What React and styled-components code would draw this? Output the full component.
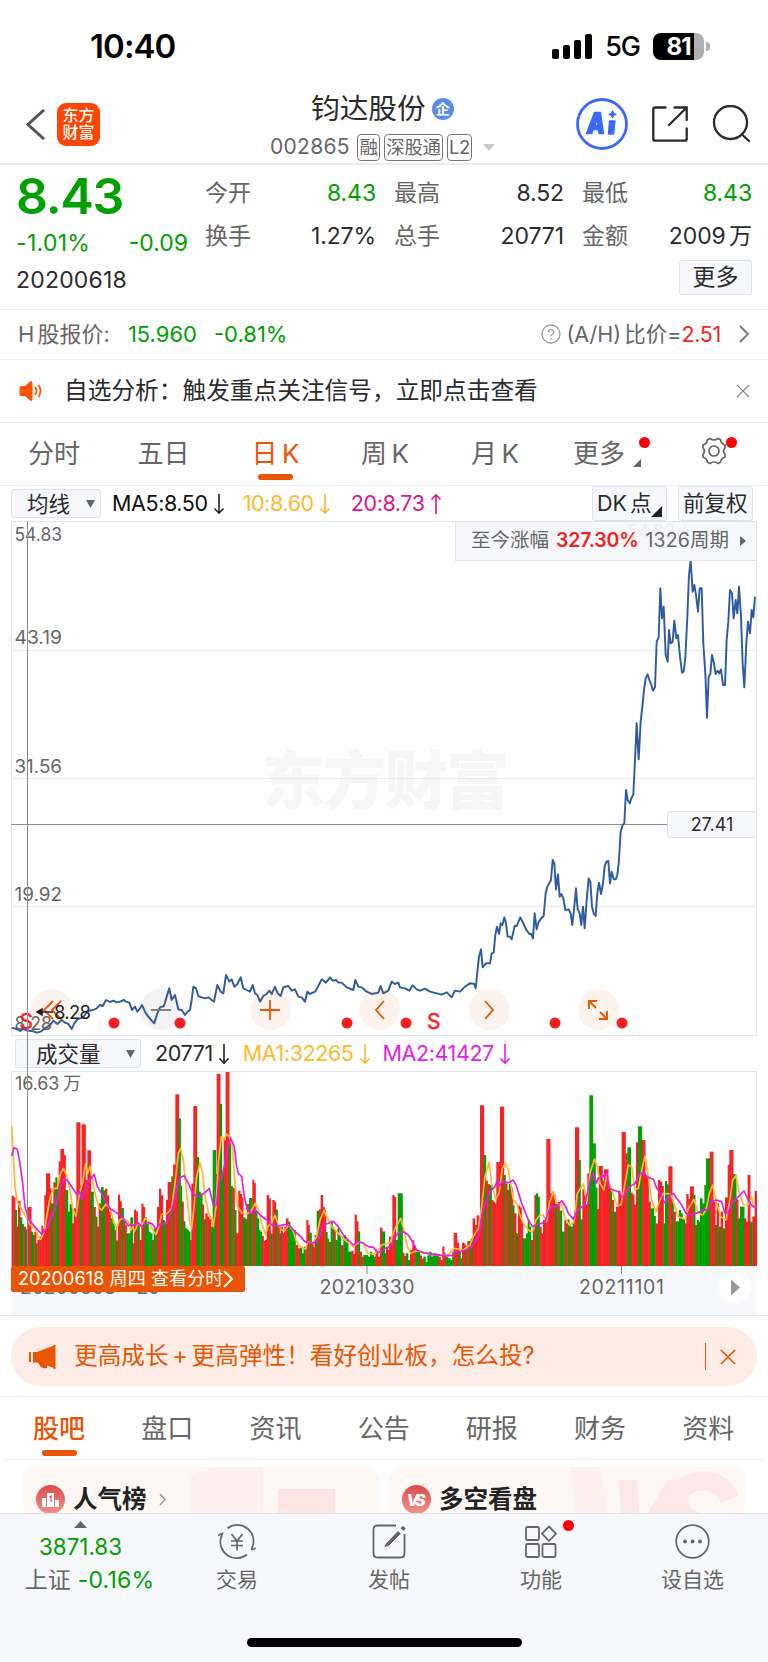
import React from "react";
import styled, { createGlobalStyle } from "styled-components";

const C = {
  green: "#00a000",
  red: "#f81f22",
  orange: "#ea5504",
  ink: "#2b2b2e",
  grey: "#666",
  line: "#ececf0",
  panel: "#f7f8fb",
  amber: "#ffb92e",
  pink: "#e0128c",
  magenta: "#e31ee6",
  blue: "#2f5c9e",
};

const GlobalStyle = createGlobalStyle`
  * { box-sizing: border-box; }
  body {
    margin: 0;
    background: #fff;
    font-family: Inter, "Noto Sans CJK SC", sans-serif;
    color: ${C.ink};
    word-spacing: -3px;
    -webkit-font-smoothing: antialiased;
  }
  svg { display: block; flex: none; }
`;

const Screen = styled.div`
  width: 768px;
  height: 1662px;
  overflow: hidden;
  display: flex;
  flex-direction: column;
`;

const Label = styled.span`
  display: inline-block;
  white-space: nowrap;
  line-height: 1.2;
  font-size: ${(p) => p.$size || 23}px;
  font-weight: ${(p) => p.$weight || 400};
  color: ${(p) => p.$color || C.ink};
  letter-spacing: ${(p) => p.$track || 0}px;
  margin-left: ${(p) => p.$ml || 0}px;
`;

/* status bar */
const StatusBar = styled.div`
  height: 85px;
  flex: none;
  display: flex;
  align-items: center;
  padding: 9px 58px 0 90px;
`;
const StatusRight = styled.div`
  margin-left: auto;
  display: flex;
  align-items: center;
`;
const Battery = styled.div`
  width: 51px;
  height: 27px;
  margin-left: 13px;
  border-radius: 8px;
  background: linear-gradient(90deg, #000 81%, #b0b0b3 81%);
  color: #fff;
  font-size: 24px;
  font-weight: 700;
  line-height: 27px;
  text-align: center;
  letter-spacing: -1px;
`;
const BatteryCap = styled.div`
  width: 4px;
  height: 9px;
  margin-left: 2px;
  border-radius: 0 4px 4px 0;
  background: #b0b0b3;
`;

/* header */
const Header = styled.header`
  height: 80px;
  flex: none;
  display: grid;
  grid-template-columns: 270px 1fr 193px;
  border-bottom: 2px solid ${C.line};
`;
const HeaderLeft = styled.div`
  display: flex;
  align-items: center;
  gap: 12px;
  padding: 0 0 0 26px;
`;
const AppLogo = styled.div`
  width: 43px;
  height: 43px;
  border-radius: 9px;
  background: #ff4500;
  color: #fff;
  font-size: 16px;
  line-height: 17.5px;
  font-weight: 500;
  text-align: center;
  padding-top: 4px;
`;
const HeaderTitle = styled.div`
  display: flex;
  flex-direction: column;
`;
const TitleLine = styled.div`
  display: flex;
  align-items: center;
  height: 46px;
  padding: 2px 0 0 41px;
`;
const Badge = styled.div`
  width: 22px;
  height: 22px;
  margin-left: 6px;
  border-radius: 50%;
  background: #5b8ce8;
  color: #fff;
  font-size: 14px;
  font-weight: 700;
  line-height: 21px;
  text-align: center;
`;
const CodeLine = styled.div`
  display: flex;
  align-items: center;
  gap: 4px;
  height: 32px;
`;
const Code = styled(Label)`
  width: 83px;
`;
const Tag = styled.span`
  height: 27px;
  width: ${(p) => p.$w}px;
  border: 1.5px solid #777;
  border-radius: 4px;
  color: ${C.grey};
  font-size: 18.5px;
  line-height: 24px;
  text-align: center;
  white-space: nowrap;
  letter-spacing: -0.3px;
`;
const HeaderRight = styled.div`
  display: flex;
  align-items: center;
  gap: 24px;
  padding-left: 1px;
`;

/* quote summary */
const Quote = styled.section`
  height: 145px;
  flex: none;
  display: grid;
  grid-template-columns: 188px 547px;
  column-gap: 17px;
  border-bottom: 1px solid #f0f0f3;
`;
const QuoteMain = styled.div`
  padding: 2px 0 0 16px;
`;
const BigPrice = styled.div`
  font-size: 50px;
  font-weight: 600;
  line-height: 59px;
  letter-spacing: -1.2px;
  color: ${C.green};
`;
const Spread = styled.div`
  display: flex;
  justify-content: space-between;
  align-items: center;
  height: 36.5px;
`;
const Stats = styled.div`
  display: grid;
  grid-template-columns: 171px 170px 170px;
  column-gap: 18px;
  grid-template-rows: 43px 43px 36px;
  padding-top: 7px;
  row-gap: 0;
`;
const Stat = styled.div`
  display: flex;
  justify-content: space-between;
  align-items: center;
`;
const MoreButton = styled.button`
  grid-column: 3;
  justify-self: end;
  margin-top: 2px;
  width: 73px;
  height: 35px;
  padding: 0;
  border: 1px solid #dfe3ec;
  border-radius: 3px;
  background: ${C.panel};
  color: ${C.ink};
  font: 400 23px/31px Inter, "Noto Sans CJK SC", sans-serif;
`;

const InfoRow = styled.div`
  height: ${(p) => p.$h}px;
  flex: none;
  display: flex;
  align-items: center;
  padding: 0 18px;
  border-bottom: 1px solid #f0f0f3;
`;
const Push = styled.div`
  margin-left: auto;
  display: flex;
  align-items: center;
`;

/* tabs */
const Tabs = styled.nav`
  height: ${(p) => p.$h}px;
  flex: none;
  display: grid;
  grid-template-columns: ${(p) => p.$cols};
  margin: 0 ${(p) => p.$inset || 0}px;
  border-bottom: ${(p) => p.$line || 1}px solid #eeeef1;
`;
const Tab = styled.div`
  position: relative;
  display: flex;
  justify-content: center;
  align-items: center;
  padding: 0 ${(p) => p.$pr || 0}px ${(p) => p.$pb || 6}px 0;
  font-size: 26px;
  white-space: nowrap;
  color: ${(p) => (p.$on ? C.orange : C.grey)};
  font-weight: ${(p) => (p.$on ? p.$weight || 500 : 400)};
  &::after {
    content: "";
    display: ${(p) => (p.$on ? "block" : "none")};
    position: absolute;
    bottom: ${(p) => p.$bar || 5}px;
    left: 50%;
    width: 35px;
    height: 6px;
    margin-left: -17.5px;
    border-radius: 3px;
    background: ${C.orange};
  }
`;
const RedDot = styled.i`
  position: absolute;
  width: 11px;
  height: 11px;
  border-radius: 50%;
  background: #ff0005;
  right: ${(p) => p.$right}px;
  top: ${(p) => p.$top}px;
`;
const TabCorner = styled.i`
  position: absolute;
  right: 25px;
  top: 36px;
  border-left: 8px solid transparent;
  border-bottom: 8px solid ${C.grey};
`;

/* indicator rows */
const Indicators = styled.div`
  height: ${(p) => p.$h}px;
  flex: none;
  display: flex;
  align-items: center;
  padding: 0 15px 0 ${(p) => p.$pl}px;
`;
const Picker = styled.div`
  display: flex;
  align-items: center;
  justify-content: space-between;
  width: ${(p) => p.$w}px;
  height: 29px;
  padding: 0 5px 0 ${(p) => p.$pl}px;
  border: 1px solid #dfe3ec;
  border-radius: 3px;
  background: ${C.panel};
  font-size: 21.5px;
  line-height: 26px;
  white-space: nowrap;
`;
const Chip = styled.div`
  position: relative;
  width: 75px;
  height: 35px;
  margin-left: ${(p) => p.$ml || 0}px;
  border: 1px solid #dfe3ec;
  border-radius: 3px;
  background: ${C.panel};
  font-size: 21.5px;
  line-height: 33px;
  padding-left: 4px;
  white-space: nowrap;
`;
const Corner = styled.i`
  position: absolute;
  right: 4px;
  bottom: 3px;
  border-left: 11px solid transparent;
  border-bottom: 11px solid #222;
`;

/* charts */
const Charts = styled.section`
  position: relative;
  flex: none;
  height: 795px;
  border-bottom: 1px solid #e4e6ea;
`;
const Plot = styled.div`
  position: relative;
  height: ${(p) => p.$h}px;
  margin: 0 11px;
  overflow: visible;
`;
const Gain = styled.div`
  position: absolute;
  top: 0;
  right: 0;
  width: 302px;
  height: 40px;
  display: flex;
  align-items: center;
  padding-left: 15px;
  border: 1px solid #dfe3ea;
  background: rgba(247, 248, 251, 0.95);
`;
const Controls = styled.div`
  position: absolute;
  left: 20px;
  bottom: 6px;
  display: flex;
  gap: 68.4px;
`;
const Round = styled.div`
  width: 41px;
  height: 41px;
  border-radius: 50%;
  display: grid;
  place-items: center;
  background: ${(p) => (p.$off ? "rgba(80,80,90,.07)" : "rgba(240,90,10,.08)")};
`;
const LowMark = styled.div`
  position: absolute;
  left: 23px;
  top: 476px;
`;
const Crosshair = styled.div`
  position: absolute;
  left: 27px;
  top: 0;
  width: 1px;
  height: 745px;
  background: #8b8b8f;
`;
const PriceTag = styled.div`
  position: absolute;
  right: 0;
  top: 290px;
  width: 90px;
  height: 27px;
  border: 1px solid #dfe3ea;
  border-radius: 3px;
  background: ${C.panel};
  font-size: 18px;
  line-height: 26px;
  text-align: center;
`;
const Axis = styled.div`
  position: relative;
  height: 49px;
  margin: 0 11px;
  background: ${C.panel};
`;
const DayTag = styled.div`
  position: absolute;
  left: 0;
  top: 0;
  width: 234px;
  height: 26px;
  padding-left: 7px;
  display: flex;
  align-items: center;
  border-radius: 2px;
  background: ${C.orange};
  word-spacing: 0;
`;

/* banner */
const BannerWrap = styled.div`
  height: 81px;
  flex: none;
  padding: 11px 11px 0;
  border-bottom: 1px solid #eeeef1;
`;
const Banner = styled.div`
  height: 59px;
  border-radius: 29.5px;
  background: #fdece5;
  display: flex;
  align-items: center;
  padding: 0 21px 0 17px;
`;
const Bar = styled.i`
  width: 1px;
  height: 27px;
  background: ${C.orange};
  margin-right: 14px;
`;

/* cards */
const Cards = styled.div`
  height: 53px;
  flex: none;
  display: grid;
  grid-template-columns: 358px 358px;
  gap: 8px;
  padding: 7px 22px 0;
  overflow: hidden;
`;
const Card = styled.div`
  position: relative;
  height: 90px;
  border-radius: 15px;
  background: #fef7f4;
  display: flex;
  align-items: center;
  padding: 5px 14px 30px;
  overflow: hidden;
`;
const CardArt = styled.div`
  position: absolute;
  right: 0;
  top: 0;
`;

/* bottom bar */
const BottomBar = styled.footer`
  height: 149px;
  flex: none;
  border-top: 1px solid #dfe2e6;
  background: ${C.panel};
  display: flex;
  flex-direction: column;
  align-items: center;
`;
const NavItems = styled.div`
  width: 768px;
  height: 124px;
  display: grid;
  grid-template-columns: 161px 152px 152px 152px 151px;
`;
const NavItem = styled.div`
  position: relative;
  display: flex;
  flex-direction: column;
  align-items: center;
  padding-top: 10px;
  gap: 6px;
  font-size: 21px;
  line-height: 29px;
  color: ${C.grey};
  white-space: nowrap;
`;
const IndexItem = styled(NavItem)`
  padding-top: 7px;
`;
const IndexChange = styled.div`
  display: flex;
  align-items: baseline;
  padding-left: 18px;
`;
const HomeBar = styled.div`
  width: 275px;
  height: 9px;
  border-radius: 5px;
  background: #000;
`;

/* Chart coordinates are kept at three units per pixel. */
const pairs = (s, dx = 0, dy = 0) =>
  s.trim().split(/\s+/).map((t) => {
    const [x, y] = t.split(",").map(Number);
    return [x + dx, y + dy];
  });
const path = (pts) => "M" + pts.map((p) => p.join(" ")).join("L");

const price = [
  ...pairs("35,203 50,207 60,213 70,207 82,212 100,214 110,218 122,215 135,205 150,195 160,182 172,192 185,180 195,188 205,192 215,207 223,190 232,178 240,175 250,172 258,160 268,152 280,150 290,145 300,135 308,138 318,120 330,126 340,122 350,127 360,125 372,120 378,125 388,128 396,150 405,140 412,155 420,145 426,135 435,155 445,170 455,182 463,190 472,160 480,142 492,138 500,110 508,85 515,120 525,105 535,148 545,150 555,165 563,155 570,150 575,120 580,80 588,85 595,108 605,112 615,115 625,112 635,120 642,125 652,75 662,95 670,100 678,45 688,65 695,58 703,80 712,72 722,52 730,85 740,90 750,95 758,75 765,100 772,105 780,125 790,108 800,102 808,92 815,102 825,80 833,100 842,108 850,82 865,78 875,92 885,88 895,110 905,112 915,125 922,95 930,102 945,95 955,78 965,58 978,68 990,52 998,62 1008,60 1015,68 1025,68 1040,82 1060,90 1066,60 1075,80 1085,82 1100,95 1115,102 1135,98 1142,78 1150,100 1165,92 1175,65 1185,72 1195,68", 0, 2880),
  ...pairs("60,82 75,85 88,92 98,76 110,88 120,92 135,86 150,95 170,100 185,104 200,97 215,112 225,92 240,95 255,80 270,70 283,72", 1140, 2880),
  ...pairs("77,1345 87,1250 93,1228 98,1282 108,1270 120,1270 125,1240 131,1238 136,1185 141,1160 147,1182 152,1150 157,1155 163,1132 168,1150 173,1190 180,1190 185,1198 194,1158 200,1158 211,1132 221,1152 228,1168 238,1182 244,1182 249,1195 254,1120 260,1168 265,1148 275,1133 281,1128 287,1060 292,1040 303,1020 308,960 313,970 318,1048 324,1003 329,1070 334,1062 340,1075 346,1110 356,1108 362,1120 367,1155 372,1108 378,1045 383,1108 389,1120 394,1155 399,1100 404,1165 410,1080 416,1015 421,1025 426,1100 431,1120 437,1128 442,1060 447,1028 453,1062 459,1030 464,980 469,965 475,963 480,1030 485,995 491,1018 497,1018 502,1005 507,960 512,875 518,855 523,850 528,750 533,780 539,790 544,775 550,763 556,640 560,550 566,658 572,545 577,500 582,450 587,415 593,403 598,420 604,435 609,452 615,442 620,305 626,292 631,145 636,235 641,200 647,345 653,365 657,270 662,310 668,305 673,242 679,295 684,285 690,350 696,398 701,395 706,355 712,230 717,105 722,62 728,155 733,135 738,165 744,215 749,145 755,145 760,310 766,400 771,533 776,410 781,402 786,345 792,370 797,402 803,392 808,400 813,388 819,435 825,435 830,300 835,245 840,150 846,160 851,235 857,180 862,220 867,140 873,230 878,370 883,442 889,310 894,245 900,280 905,210 910,232 915,170", 1350, 1620),
];

const volLeft = "35,407,r 45,450,g 50,500,r 54,423,r 60,472,g 70,500,r 77,508,g 83,441,r 93,515,g 103,516,r 108,550,g 112,540,r 118,530,r 124,497,r 133,405,r 138,340,r 149,385,r 153,430,g 160,367,r 166,352,g 176,304,r 181,267,r 191,285,r 196,390,g 203,455,g 209,433,g 216,490,r 221,445,r 229,187,r 240,377,g 245,193,r 256,360,r 262,271,r 272,395,g 280,441,r 286,470,g 291,500,r 296,430,r 303,381,g 315,386,r 326,455,r 331,475,g 343,510,r 348,541,g 354,404,r 364,444,g 370,480,r 379,520,g 391,472,g 398,550,r 402,449,r 412,490,g 418,540,r 424,431,r 434,472,g 445,515,g 456,540,r 461,505,g 471,441,r 477,386,r 488,480,g 498,420,r 503,366,r 514,349,g 519,314,r 526,103,r 536,175,g 541,377,g 545,425,r 550,484,g 560,509,g 570,540,r 574,371,r 580,138,r 590,291,g 596,395,g 606,433,r 611,478,g 616,460,r 627,477,r 632,500,g 638,270,g 647,342,r 650,42,r 660,132,g 665,335,g 671,240,r 677,36,r 687,230,g 692,378,g 697,383,r 703,450,g 708,520,r 715,392,r 725,412,r 729,472,g 741,432,r 747,414,g 757,359,r 766,455,g 776,510,g 785,528,r 795,540,r 800,405,r 811,520,g 817,420,r 827,449,g 832,500,r 838,520,g 842,500,r 858,475,r 864,485,g 875,510,g 886,555,r 900,560,g 916,570,r 919,480,r 928,518,g 934,550,r 944,525,r 950,452,g 957,448,r 962,405,r 968,440,r 977,516,g 986,546,r 992,485,g 1001,510,r 1006,540,g 1012,505,g 1022,555,r 1030,525,g 1044,575,g 1054,572,r 1064,464,r 1074,514,g 1079,575,r 1090,585,g 1110,575,g 1126,570,r 1140,503,r";
const volRight = "6,514,g 14,580,g 18,560,r 27,530,r 37,405,r 47,540,g 53,400,g 67,578,r 77,580,g 90,570,r 97,541,r 106,575,g 119,586,r 130,590,g 142,586,g 148,575,g 158,580,g 175,590,r 187,560,r 197,590,g 217,575,g 221,519,r 230,548,r 236,575,g 246,548,r 257,560,g 262,543,r 272,536,g 278,475,r 290,466,r 300,136,r 311,285,g 317,362,r 327,375,g 334,420,r 349,306,r 360,140,r 371,345,g 376,370,r 386,372,g 392,385,r 398,436,g 402,460,r 408,520,g 414,437,r 424,480,r 428,535,g 438,520,g 443,480,g 452,540,r 459,510,g 463,405,r 468,400,g 478,500,r 489,480,r 499,237,r 510,400,r 516,395,r 525,430,g 532,426,r 538,452,g 545,515,g 553,480,r 562,478,g 572,500,r 578,490,g 583,452,r 585,202,r 596,300,g 601,478,g 607,388,r 616,433,r 622,340,r 628,106,g 638,250,g 646,383,g 651,447,r 656,318,r 667,362,r 672,328,r 684,375,r 690,390,g 695,420,r 701,455,g 708,440,r 715,392,r 725,216,r 736,280,r 742,262,g 752,398,r 762,434,r 768,247,r 774,199,g 785,240,r 795,345,r 805,425,r 811,445,g 821,468,g 826,490,r 834,360,r 845,378,r 850,490,g 855,363,g 865,319,r 876,418,g 880,455,r 886,484,g 897,450,g 907,475,g 914,490,r 919,402,r 930,379,r 940,405,g 945,495,r 950,480,g 960,415,g 973,375,g 978,295,g 989,275,r 999,425,r 1005,495,g 1010,430,r 1016,500,g 1022,455,r 1028,505,g 1035,412,r 1043,315,r 1048,270,r 1059,343,g 1068,418,r 1074,475,g 1080,440,g 1092,475,r 1103,345,r 1110,485,g 1117,470,r 1124,393,r";
const parseBars = (s, dx) =>
  s.split(" ").map((t) => {
    const [x, y, c] = t.split(",");
    return { x: +x + dx, y: +y, up: c === "r" };
  });
const segments = [...parseBars(volLeft, 0), ...parseBars(volRight, 1140)];
const bars = segments.flatMap((b, i) => {
  const end = i + 1 < segments.length ? segments[i + 1].x : 2270;
  const n = Math.max(1, Math.round((end - b.x) / 6));
  const w = (end - b.x) / n;
  return Array.from({ length: n }, (_, k) => ({
    x: b.x + k * w,
    w,
    up: b.up,
    y: b.y > 350 ? Math.min(606, b.y + (k ? ((i * 7 + k * 11) % 5) * 5 : 0)) : b.y,
  }));
});

const maFast = [
  ...pairs("35,198 38,250 45,380 52,425 60,440 75,465 90,495 105,505 115,530 122,538 133,515 140,470 150,415 160,385 172,385 180,345 190,325 200,345 210,390 218,445 228,470 238,400 248,370 256,312 263,340 270,318 280,375 290,420 298,445 305,450 318,432 330,445 340,480 350,508 358,480 370,475 385,485 392,510 398,500 403,515 415,488 425,500 435,475 447,485 455,505 468,524 478,495 485,462 500,462 515,445 525,370 535,280 542,265 550,300 560,400 568,480 575,505 582,440 590,350 600,308 608,340 615,410 625,455 635,480 640,500 648,440 655,310 664,230 672,240 680,222 688,230 697,260 705,370 713,440 725,458 740,462 752,455 766,430 775,450 785,490 797,525 803,500 815,488 825,465 835,495 845,510 855,512 865,495 878,510 888,540 900,560 915,567 925,545 938,550 950,530 960,480 972,452 980,470 995,500 1010,515 1025,530 1040,545 1060,560 1080,545 1092,550 1102,580 1125,582"),
  ...pairs("5,555 30,548 45,505 62,475 72,510 82,560 92,580 110,572 130,578 160,585 205,585 222,565 250,570 270,555 280,530 295,505 305,440 315,350 327,307 335,370 347,418 357,400 367,325 375,310 385,330 392,370 400,420 410,430 418,460 430,490 445,510 457,517 468,480 480,465 490,465 500,485 508,430 520,395 530,430 545,435 555,475 570,497 583,480 592,400 610,372 620,425 630,340 643,298 652,320 660,370 672,390 680,345 690,375 700,405 710,433 723,435 733,380 745,315 755,320 765,390 775,385 785,330 795,288 805,350 815,420 828,455 840,420 850,400 872,402 885,440 895,470 915,478 925,445 942,418 955,460 968,465 978,450 988,400 998,375 1010,430 1022,470 1038,480 1048,430 1058,360 1068,347 1078,400 1090,435 1105,435 1115,410 1120,440 1128,440", 1140),
];
const maSlow = [
  ...pairs("35,288 42,263 52,268 60,310 68,370 75,440 85,475 100,495 115,512 125,522 140,505 155,470 170,430 182,380 193,355 205,365 215,380 230,403 238,395 245,418 255,390 265,365 283,343 292,380 305,400 315,420 330,445 345,455 365,470 385,497 395,493 405,497 415,488 425,500 440,488 455,490 468,507 480,492 498,490 510,465 520,435 530,385 540,353 552,347 565,370 578,400 590,410 610,402 628,385 640,435 650,435 655,375 665,350 675,310 683,265 692,235 703,260 710,320 715,340 725,350 733,410 742,450 755,460 765,448 780,465 800,480 815,495 835,498 855,493 870,498 885,515 900,528 915,545 935,550 950,545 960,525 970,495 985,490 1000,484 1015,500 1030,525 1045,540 1060,555 1075,545 1090,550 1105,560 1120,562 1135,578"),
  ...pairs("15,565 30,560 40,540 55,518 70,515 85,525 97,545 110,570 130,578 160,583 190,587 215,587 225,577 245,573 260,570 275,560 285,545 297,525 307,465 317,425 330,395 345,380 352,360 357,378 370,365 385,368 400,360 410,380 425,430 445,480 457,500 470,495 485,490 495,485 505,455 515,440 530,440 545,422 557,440 565,460 580,478 590,455 600,445 613,435 622,400 630,360 640,340 648,370 655,355 668,350 680,338 688,385 700,390 715,395 728,412 740,395 750,380 765,370 775,350 783,340 790,335 800,350 820,358 830,385 838,395 845,410 853,428 870,405 880,400 890,415 905,435 918,460 935,465 950,460 965,452 985,448 993,425 1010,420 1025,425 1035,460 1047,455 1055,430 1070,415 1092,393 1105,420 1118,440 1128,440", 1140),
];

const ArrowIcon = styled.svg`
  margin-left: 5px;
`;
const Arrow = ({ up, color }) => (
  <ArrowIcon width="12" height="22" viewBox="0 0 12 22" fill="none" stroke={color} strokeWidth="1.6">
    <g transform={up ? "rotate(180 6 11)" : undefined}>
      <path d="M6 1v19M1.5 15.5 6 20.2l4.500-4.700" />
    </g>
  </ArrowIcon>
);
const Down = ({ w = 9, h = 8, color = "#666" }) => (
  <svg width={w} height={h} viewBox="0 0 10 8" preserveAspectRatio="none"><path d="M0 0h10L5 8z" fill={color} /></svg>
);
const Cross = ({ size = 16, color = "#888" }) => (
  <svg width={size} height={size} viewBox="0 0 16 16" stroke={color} strokeWidth="1.6"><path d="M1 1l14 14M15 1 1 15" /></svg>
);
const Chevron = ({ w, h, color, sw = 2, left }) => (
  <svg width={w} height={h} viewBox={`0 0 ${w} ${h}`} fill="none" stroke={color} strokeWidth={sw}>
    <path d={left ? `M${w - 1} 1L2 ${h / 2}L${w - 1} ${h - 1}` : `M1 1L${w - 2} ${h / 2}L1 ${h - 1}`} />
  </svg>
);

const STATS = [
  ["今开", "8.43", C.green], ["最高", "8.52"], ["最低", "8.43", C.green],
  ["换手", "1.27%"], ["总手", "20771"], ["金额", "2009 万"],
];

const GRID = [["54.83", 1563, 540.5], ["43.19", 1949, 643.5], ["31.56", 2335, 772.5], ["19.92", 2719, 900.5], ["8.28", 3108, 1029.5]];
const DOTS = [114, 180, 347, 406, 555, 622];

function PriceChart() {
  return (
    <Plot $h={515}>
      <svg width="746" height="515" viewBox="11 521 746 515" fontFamily="Inter, 'Noto Sans CJK SC', sans-serif">
        <text x="262" y="803" fontSize="63" fontWeight="900" textLength="247" fill="#f6f6f7" fontFamily="'Noto Sans CJK SC', sans-serif">东方财富</text>
        <rect x="11.500" y="521.500" width="745" height="514" fill="none" stroke="#e3e5ec" />
        {GRID.slice(1, 4).map(([t, y]) => (
          <path key={t} d={`M11 ${Math.round(y / 3) + 0.5}H757`} stroke="#e6ebf2" />
        ))}
        {GRID.map(([t, , y]) => (
          <text key={t} x="14.500" y={y} fontSize="18" fill="#666" textLength={t.length > 4 ? 47.5 : 37.5} lengthAdjust="spacingAndGlyphs">{t}</text>
        ))}
        <text x="627" y="538" fontSize="18" fill="#222" textLength="65">54.83→</text>
        <path d="M11 824.500H668" stroke="#8b8b8f" />
        <path d={path(price)} transform="scale(.33333)" fill="none" stroke={C.blue} strokeWidth="5.800" strokeLinejoin="round" />
        {DOTS.map((x) => <circle key={x} cx={x} cy="1023" r="5.500" fill={C.red} />)}
        <text x="427" y="1029" fontSize="21" fill={C.red} stroke={C.red} strokeWidth=".5" textLength="12">S</text>
        <text x="19.500" y="1029" fontSize="21" fill={C.red} stroke={C.red} strokeWidth=".5">S</text>
      </svg>
      <Controls>
        <Round><svg width="22" height="22" viewBox="0 0 22 22" fill="none" stroke={C.orange} strokeWidth="1.800"><path d="M12 2 3 11l9 9M20 2l-9 9 9 9" /></svg></Round>
        <Round $off><svg width="20" height="20" viewBox="0 0 20 20" stroke="#777" strokeWidth="1.800"><path d="M0 10h20" /></svg></Round>
        <Round><svg width="20" height="20" viewBox="0 0 20 20" stroke={C.orange} strokeWidth="1.800"><path d="M0 10h20M10 0v20" /></svg></Round>
        <Round><Chevron w={11} h={20} color={C.orange} left sw={1.8} /></Round>
        <Round><Chevron w={11} h={20} color={C.orange} sw={1.8} /></Round>
        <Round><svg width="22" height="22" viewBox="0 0 22 22" fill="none" stroke={C.orange} strokeWidth="1.900"><path d="M10 2H2v8M2 2l7 7M13 13l7 7M20 12v8h-8" /></svg></Round>
      </Controls>
      <LowMark>
        <svg width="80" height="30" viewBox="0 0 80 30">
          <path d="M3 15l5-3v6zM8 15h11" stroke="#222" strokeWidth="1.500" fill="#222" />
          <text x="20" y="21.500" fontSize="18.500" fill="#222" textLength="37" fontFamily="Inter">8.28</text>
        </svg>
      </LowMark>
      <Gain>
        <Label $size={19.5} $color="#666">至今涨幅</Label>
        <Label $size={19.5} $weight={600} $color={C.red} $ml={7} $track={-0.2}>327.30%</Label>
        <Label $size={19.5} $color="#666" $ml={7} $track={0.1}>1326周期</Label>
        <Label $ml={11}><svg width="6" height="10" viewBox="0 0 6 10"><path d="M0 0l6 5-6 5z" fill="#666" /></svg></Label>
      </Gain>
      <PriceTag>27.41</PriceTag>
    </Plot>
  );
}

function VolumeChart() {
  return (
    <Plot $h={195}>
      <svg width="746" height="195" viewBox="33 33 2238 585" fontFamily="Inter, 'Noto Sans CJK SC', sans-serif">
        <rect x="34.500" y="34.500" width="2235" height="590" fill="none" stroke="#e3e5ec" strokeWidth="3" />
        <text x="45" y="89" fontSize="54" fill="#666" textLength="198">16.63 万</text>
        {bars.map((b, i) => (
          <rect key={i} x={b.x} y={b.y} width={b.w + 1.5} height={618 - b.y} fill={b.up ? "#f52324" : "#00a000"} />
        ))}
        <path d={path(maFast)} fill="none" stroke={C.amber} strokeWidth="5" strokeLinejoin="round" />
        <path d={path(maSlow)} fill="none" stroke={C.magenta} strokeWidth="5" strokeLinejoin="round" />
      </svg>
    </Plot>
  );
}

export default function App() {
  return (
    <Screen>
      <GlobalStyle />
      <StatusBar>
        <Label $size={33} $weight={600} $color="#000" $track={-0.9}>10:40</Label>
        <StatusRight>
          <svg width="40" height="26" viewBox="0 0 40 26"><g fill="#000"><rect y="15" width="7" height="10" rx="2" /><rect x="11" y="11" width="7" height="14" rx="2" /><rect x="22" y="6" width="7" height="19" rx="2" /><rect x="33" width="7" height="25" rx="2" /></g></svg>
          <Label $size={27} $weight={500} $color="#000" $ml={13} $track={-1}>5G</Label>
          <Battery>81</Battery>
          <BatteryCap />
        </StatusRight>
      </StatusBar>

      <Header>
        <HeaderLeft>
          <Chevron w={19} h={31} color="#555" sw={3} left />
          <AppLogo>东方<br />财富</AppLogo>
        </HeaderLeft>
        <HeaderTitle>
          <TitleLine><Label $size={28.7}>钧达股份</Label><Badge>企</Badge></TitleLine>
          <CodeLine>
            <Code $size={21} $color="#666" $track={0.3}>002865</Code>
            <Tag $w={23}>融</Tag><Tag $w={59}>深股通</Tag><Tag $w={25}>L2</Tag>
            <Label $ml={7}><Down w={12} h={7} color="#c9c9c9" /></Label>
          </CodeLine>
        </HeaderTitle>
        <HeaderRight>
          <svg width="52" height="52" viewBox="0 0 52 52" fill="none">
            <circle cx="26" cy="26" r="24.500" stroke="#3a68ff" strokeWidth="2.800" />
            <g fill="#3a68ff" stroke="#3a68ff" strokeLinejoin="round">
              <path d="M18.500 14.500h6l3 21h-4.500l-.6-4h-5l-1.700 4h-5.200zM21.500 20.500l-2.600 7h3.200z" fillRule="evenodd" strokeWidth="1.400" />
              <path d="M33.500 23h5.500l-1.500 13h-5z" strokeWidth="1.400" />
              <path d="M36.500 12.500l1.300 2.500 2.500 1.300-2.500 1.300-1.300 2.500-1.300-2.500-2.500-1.300 2.500-1.300z" strokeWidth=".8" />
            </g>
          </svg>
          <svg width="36" height="36" viewBox="0 0 36 36" fill="none" stroke="#2b2b2e" strokeWidth="2.300" strokeLinecap="round">
            <path d="M13.500 1.500H3Q1.300 1.500 1.300 3v30Q1.300 34.700 3 34.700h30q1.700 0 1.700-1.700V22.500M22.500 1.500h12.200v12.500M34.700 1.500 17 19" />
          </svg>
          <svg width="38" height="38" viewBox="0 0 38 38" fill="none" stroke="#2b2b2e" strokeWidth="2.300" strokeLinecap="round">
            <circle cx="18.500" cy="17.500" r="16.500" /><path d="M30 29.500 37 36" />
          </svg>
        </HeaderRight>
      </Header>

      <Quote>
        <QuoteMain>
          <BigPrice>8.43</BigPrice>
          <Spread>
            <Label $color={C.green} $track={0.3}>-1.01%</Label>
            <Label $color={C.green}>-0.09</Label>
          </Spread>
          <Spread><Label $size={23} $track={0.2}>20200618</Label></Spread>
        </QuoteMain>
        <Stats>
          {STATS.map(([k, v, c]) => (
            <Stat key={k}><Label $color="#666">{k}</Label><Label $color={c} $track={-0.1}>{v}</Label></Stat>
          ))}
          <MoreButton>更多</MoreButton>
        </Stats>
      </Quote>

      <InfoRow $h={50}>
        <Label $size={22} $color="#666">H 股报价:</Label>
        <Label $size={22} $color={C.green} $ml={18}>15.960</Label>
        <Label $size={22} $color={C.green} $ml={17}>-0.81%</Label>
        <Push>
          <svg width="20" height="20" viewBox="0 0 20 20" fill="none" stroke="#999" strokeWidth="1.300"><circle cx="10" cy="10" r="9" /><path d="M7.300 8a2.700 2.700 0 1 1 3.700 2.500q-1 .5-1 1.700M10 13.800v1.600" /></svg>
          <Label $size={21.5} $color="#666" $ml={5}>(A/H) 比价=</Label>
          <Label $size={21.5} $color={C.red} $track={-0.3}>2.51</Label>
          <Label $ml={18}><Chevron w={11} h={18} color="#777" sw={1.8} /></Label>
        </Push>
      </InfoRow>

      <InfoRow $h={63}>
        <svg width="26" height="20" viewBox="0 0 26 20" fill="none"><path d="M2 6.500Q2 5.500 3 5.500h4L12 1q2-1.500 2 1v16q0 2.500-2 1L7 14.500H3Q2 14.500 2 13.500z" fill="#ff5500" stroke="#ff5500" /><path d="M17 6q3 4 0 8M20.500 4q4 6 0 12" stroke="#ff5500" strokeWidth="1.800" /></svg>
        <Label $size={23.7} $ml={20}>自选分析：触发重点关注信号，立即点击查看</Label>
        <Push><Cross size={14} /></Push>
      </InfoRow>

      <Tabs $h={63} $cols="108px 111px 113px 106px 114px 114px 102px">
        <Tab>分时</Tab><Tab>五日</Tab><Tab $on $weight={400}>日 K</Tab><Tab>周 K</Tab><Tab>月 K</Tab>
        <Tab $pr={20}>更多
          <RedDot $right={16} $top={14} />
          <TabCorner />
        </Tab>
        <Tab $pr={6}>
          <svg width="30" height="30" viewBox="0 0 30 30" fill="none" stroke="#666" strokeWidth="1.700">
            <path d="M11 2.500Q15 5.500 19 2.500l2.500 1.300q.5 4 4.500 5v3q-3 3.200 0 6.400v3q-4 1-4.500 5L19 27.500Q15 24.500 11 27.500L8.500 26.200Q8 22.200 4 21.200v-3q3-3.200 0-6.400v-3q4-1 4.500-5z" strokeLinejoin="round" /><circle cx="15" cy="15" r="5" />
          </svg>
          <RedDot $right={31} $top={14} />
        </Tab>
      </Tabs>

      <Indicators $h={35} $pl={11}>
        <Picker $w={90} $pl={15}>均线<Down /></Picker>
        <Label $size={21.5} $color="#111" $ml={11} $track={-0.4}>MA5:8.50</Label><Arrow color="#222" />
        <Label $size={21.5} $color={C.amber} $ml={18} $track={-0.4}>10:8.60</Label><Arrow color={C.amber} />
        <Label $size={21.5} $color={C.pink} $ml={20} $track={-0.4}>20:8.73</Label><Arrow color={C.pink} up />
        <Push><Chip>DK 点<Corner /></Chip><Chip $ml={11}>前复权</Chip></Push>
      </Indicators>

      <Charts>
        <PriceChart />
        <Indicators $h={35} $pl={15}>
          <Picker $w={126} $pl={20}>成交量<Down /></Picker>
          <Label $size={21.5} $ml={14} $track={-0.4}>20771</Label><Arrow color="#222" />
          <Label $size={21.5} $color={C.amber} $ml={13} $track={-0.4}>MA1:32265</Label><Arrow color={C.amber} />
          <Label $size={21.5} $color={C.magenta} $ml={12} $track={-0.4}>MA2:41427</Label><Arrow color={C.magenta} />
        </Indicators>
        <VolumeChart />
        <Axis>
          <svg width="746" height="49" viewBox="11 1266 746 49" fontFamily="Inter">
            <path d="M367 1266v8M621.500 1266v8" stroke="#888" />
            <g fontSize="19.500" fill="#666">
              <text x="20" y="1293.500" textLength="96">20200608</text><text x="129" y="1293.500" textLength="31">-20</text>
              <text x="319.500" y="1293.500" textLength="95">20210330</text><text x="579" y="1293.500" textLength="85">20211101</text>
            </g>
            <circle cx="735" cy="1287.500" r="16" fill="#fff" /><path d="M731 1279.500l9 8-9 8z" fill="#999" />
          </svg>
          <DayTag>
            <Label $size={18} $color="#fff" $track={0.1}>20200618 周四 查看分时</Label>
            <Label $ml={0}><Chevron w={11} h={18} color="#fff" sw={2} /></Label>
          </DayTag>
        </Axis>
        <Crosshair />
      </Charts>

      <BannerWrap>
        <Banner>
          <svg width="28" height="24" viewBox="0 0 28 24" fill={C.orange}><path d="M1 7h2v10H1zM5 7h4L26 .5v22.500L19 20.500v2.500q-5 .8-7-2l-1-2.500-2-1H5z" /><path d="M25.500 0h2v24h-2z" /></svg>
          <Label $size={23.6} $color={C.orange} $ml={18} $track={0.05}>更高成长 + 更高弹性！看好创业板，怎么投?</Label>
          <Push><Bar /><Cross color={C.orange} /></Push>
        </Banner>
      </BannerWrap>

      <Tabs $h={63} $inset={5} $cols="repeat(7, 108.2px)">
        {["股吧", "盘口", "资讯", "公告", "研报", "财务", "资料"].map((t, i) => (
          <Tab key={t} $on={i === 0} $bar={3} $pb={3}>{t}</Tab>
        ))}
      </Tabs>

      <Cards>
        <Card>
          <CardArt><svg width="190" height="90" viewBox="0 0 190 90"><path d="M0 8 25 0h48v90H0z" fill="#fef0ee" /><path d="M88 22h57v70H88z" fill="#fce5e3" /></svg></CardArt>
          <svg width="29" height="29" viewBox="0 0 29 29"><defs><linearGradient id="ball" x1="0" x2="0" y1="0" y2="1"><stop stopColor="#dc4b4b" /><stop offset="1" stopColor="#f0948c" /></linearGradient></defs><circle cx="14.500" cy="14.500" r="14.500" fill="url(#ball)" /><path d="M6 13h4v9H6zM11 8h7v14h-7zM19 15h4v7h-4z" fill="#fff" /><path d="M13.500 12l1.500-1v6" stroke="#d55" fill="none" strokeWidth="1.300" /></svg>
          <Label $size={24.5} $weight={600} $color="#222" $ml={8}>人气榜</Label>
          <Label $ml={12}><Chevron w={8} h={13} color="#999" sw={1.5} /></Label>
        </Card>
        <Card>
          <CardArt><svg width="176" height="90" viewBox="0 0 176 90"><path d="M0 0h30l16 90H12z" fill="#fef0ee" /><path d="M48 13h19l3 45L98 13h20L78 92H56z" fill="#fce8e6" /><path d="M160 32q-10-22-34-17-20 5-17 22 2 14 18 18" fill="none" stroke="#fce8e6" strokeWidth="19" /></svg></CardArt>
          <svg width="29" height="29" viewBox="0 0 29 29"><circle cx="14.500" cy="14.500" r="14.500" fill="url(#ball)" /><text x="4.500" y="20.500" fontFamily="Inter" fontSize="16" fontStyle="italic" fontWeight="800" fill="#fff" textLength="19">VS</text></svg>
          <Label $size={24.5} $weight={600} $color="#222" $ml={8}>多空看盘</Label>
        </Card>
      </Cards>

      <BottomBar>
        <NavItems>
          <IndexItem>
            <svg width="13" height="7" viewBox="0 0 13 7"><path d="M6.500 0 13 7H0z" fill="#666" /></svg>
            <Label $size={22.4} $color={C.green}>3871.83</Label>
            <IndexChange><Label $size={23} $color="#666">上证</Label><Label $size={23} $color={C.green} $ml={7} $track={0.2}>-0.16%</Label></IndexChange>
          </IndexItem>
          <NavItem>
            <svg width="38" height="35" viewBox="0 0 38 35" fill="none" stroke="#666" strokeWidth="1.700"><path d="M9.500 4.200A16.300 16.300 0 0 1 34.500 23M33.500 26l.8-3.500M33.500 26l4.300-2M29 30.500A16.300 16.300 0 0 1 3.300 12.500M0 11.500l4.300-2-1 4M13.500 10l5.500 7 5.500-7M19 17v9.500M13 17h12M13 21.500h12" /></svg>
            交易
          </NavItem>
          <NavItem>
            <svg width="34" height="35" viewBox="0 0 34 35" fill="none" stroke="#666" strokeWidth="1.800"><path d="M24 1.500H5.500Q1.500 1.500 1.500 5.500v24q0 4 4 4h23q4 0 4-4V10" /><path d="M14.500 19.500 26 7.500l2.300 2.200L16.500 21.500l-3.500 1z" fill="#666" strokeWidth="1" /><path d="M30 5.700l2.300-2.500" strokeWidth="4" /></svg>
            发帖
          </NavItem>
          <NavItem>
            <svg width="32" height="35" viewBox="0 0 32 35" fill="none" stroke="#666" strokeWidth="1.800"><rect x="1" y="3" width="13" height="13" rx="1.500" /><rect x="1" y="20" width="13" height="13" rx="1.500" /><rect x="17.500" y="20" width="13" height="13" rx="1.500" /><path d="M24 2.500 31 9.700 24 17l-7-7.300z" strokeLinejoin="round" /></svg>
            功能
            <RedDot $right={43} $top={6} />
          </NavItem>
          <NavItem>
            <svg width="35" height="35" viewBox="0 0 35 35"><circle cx="17.500" cy="17.500" r="16.300" fill="none" stroke="#666" strokeWidth="1.700" /><g fill="#666"><circle cx="10" cy="17.500" r="1.900" /><circle cx="17.500" cy="17.500" r="1.900" /><circle cx="25" cy="17.500" r="1.900" /></g></svg>
            设自选
          </NavItem>
        </NavItems>
        <HomeBar />
      </BottomBar>
    </Screen>
  );
}
